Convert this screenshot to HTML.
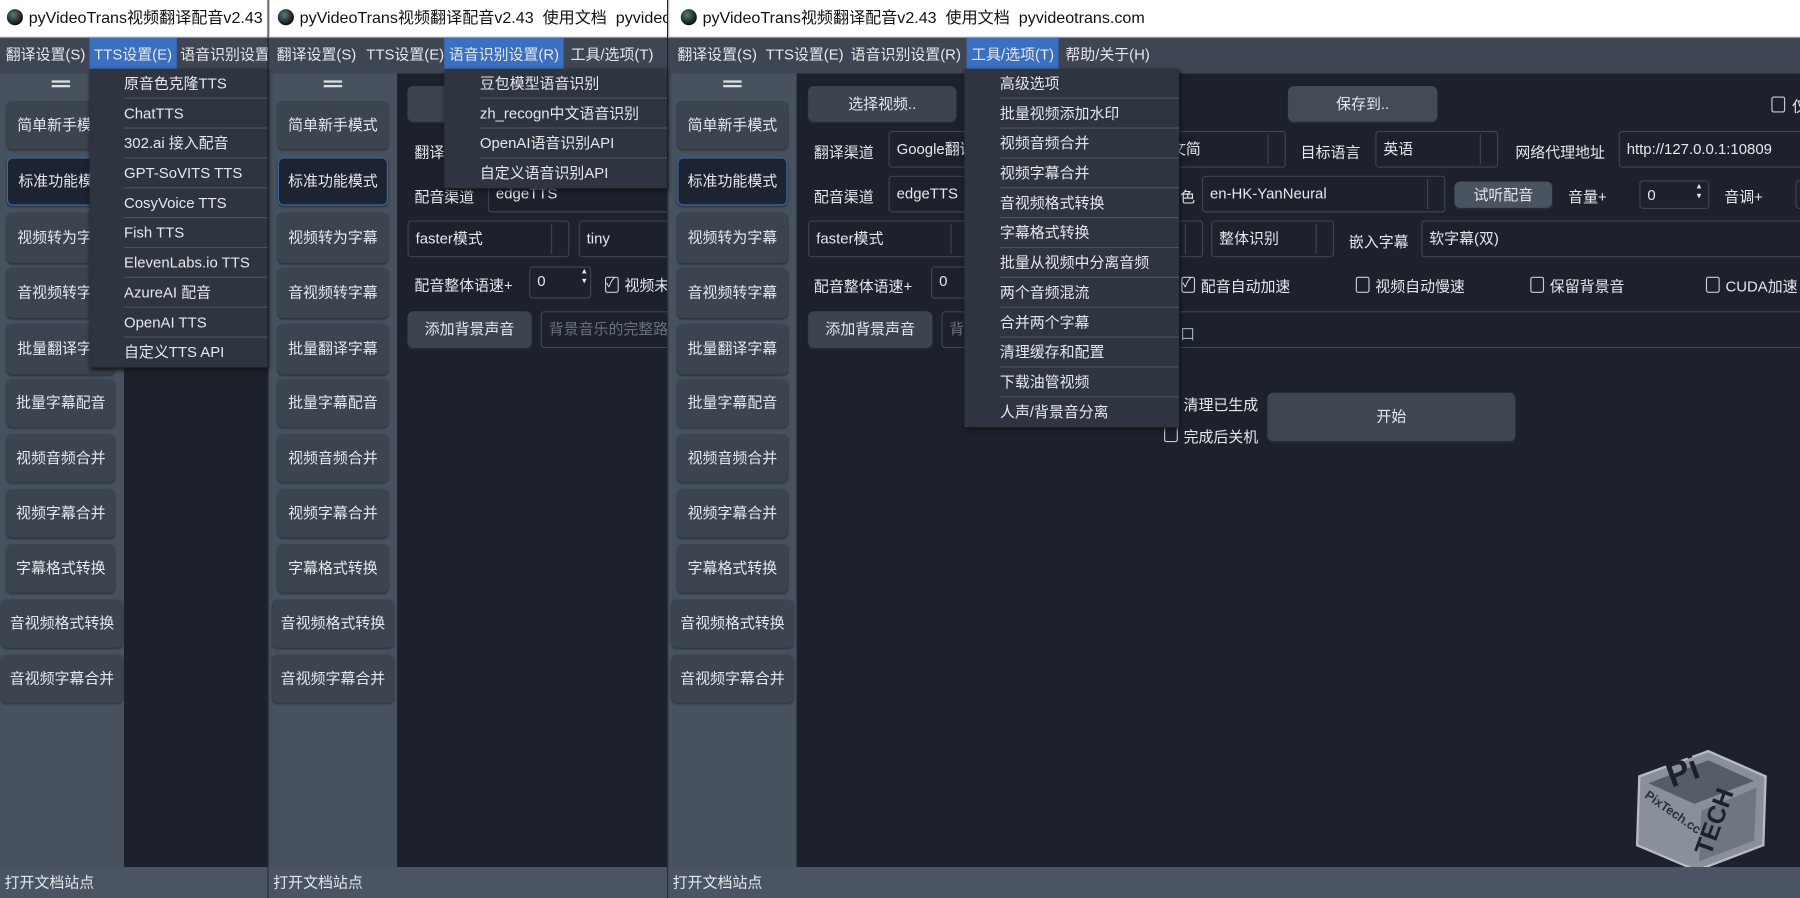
<!DOCTYPE html>
<html><head><meta charset="utf-8"><style>
*{margin:0;padding:0;box-sizing:border-box}
html,body{width:1800px;height:898px;overflow:hidden;background:#1c212b}
#w{position:absolute;left:0;top:0;width:1568px;height:782px;transform:scale(1.148,1.1484);transform-origin:0 0;font-family:"Liberation Sans","Noto Sans CJK SC",sans-serif;font-size:13px;color:#e6e8ec}
.a{position:absolute}
.tb{background:#fff;color:#111;top:0;height:33px;border-bottom:1px solid #999;font-size:14px;line-height:31px;white-space:nowrap;overflow:hidden}
.ic{display:inline-block;width:14px;height:14px;border-radius:50%;background:radial-gradient(circle at 40% 35%,#5a7a80,#111 70%);vertical-align:-2px;margin-right:5px}
.mb{top:33px;height:31px;background:#3f4653;line-height:30px;white-space:nowrap;overflow:hidden}
.mb span{position:absolute;top:0}
.hl{background:#3a6fc2;height:31px;padding:0 4px}
.sb{top:64px;bottom:27px;background:#48525f}
.ct{top:64px;bottom:27px;background:#1c212b}
.st{top:755px;height:27px;background:#4a5462;line-height:27px;padding-left:4px;color:#e6e8ec}
.btn{position:absolute;background:#3c4450;border-radius:5px;text-align:center;color:#e6e8ec;box-shadow:0 1px 2px #2a3038}
.sel{background:#1d2331;border:1px solid #3e6ba8}
.dd{position:absolute;background:#2f3540;top:60px;box-shadow:1px 2px 4px #111}
.dd div{height:26px;line-height:25px;border-bottom:1px solid #4b5360;white-space:nowrap;overflow:hidden}
.in{position:absolute;border:1px solid #3c4452;border-radius:3px;background:#1c212b;padding-left:6px;line-height:30px;white-space:nowrap;overflow:hidden}
.cb::after{content:"";position:absolute;right:0;top:2px;bottom:2px;width:14px;border-left:1px solid #3c4452}
.l{position:absolute;white-space:nowrap}
.ck{position:absolute;width:12px;height:14px;border:1px solid #c8ccd2;border-radius:2px}
.hm{position:absolute;width:16px;height:6px;border-top:2px solid #ddd;border-bottom:2px solid #ddd}
.clip{position:absolute;overflow:hidden}
</style></head><body><div id="w">
<div class="a tb" style="left:0;width:233px;padding-left:6px"><span class="ic"></span>pyVideoTrans视频翻译配音v2.43</div>
<div class="a tb" style="left:234px;width:347px;padding-left:7px;border-left:1px solid #bbb"><span class="ic"></span>pyVideoTrans视频翻译配音v2.43&nbsp; 使用文档&nbsp; pyvideotrans.com</div>
<div class="a tb" style="left:582px;width:986px;padding-left:10px;border-left:1px solid #bbb"><span class="ic"></span>pyVideoTrans视频翻译配音v2.43&nbsp; 使用文档&nbsp; pyvideotrans.com</div>
<div class="a mb" style="left:0;width:233px"><span style="left:5px">翻译设置(S)</span><span class="hl" style="left:78px">TTS设置(E)</span><span style="left:157px">语音识别设置</span></div>
<div class="a mb" style="left:234px;width:347px"><span style="left:7px">翻译设置(S)</span><span style="left:85px">TTS设置(E)</span><span class="hl" style="left:153px">语音识别设置(R)</span><span style="left:263px">工具/选项(T)</span></div>
<div class="a mb" style="left:582px;width:986px"><span style="left:8px">翻译设置(S)</span><span style="left:85px">TTS设置(E)</span><span style="left:159px">语音识别设置(R)</span><span class="hl" style="left:260px">工具/选项(T)</span><span style="left:346px">帮助/关于(H)</span></div>
<div class="a sb" style="left:0;width:108px"></div><div class="a ct" style="left:108px;width:125px"></div>
<div class="a sb" style="left:234px;width:112px"></div><div class="a ct" style="left:346px;width:235px"></div>
<div class="a sb" style="left:582px;width:112px"></div><div class="a ct" style="left:694px;width:874px"></div>
<div class="a" style="left:233px;top:64px;width:1px;height:718px;background:#2a2f38"></div>
<div class="a" style="left:581px;top:64px;width:1px;height:718px;background:#2a2f38"></div>
<div class="hm" style="left:45px;top:70px"></div><div class="hm" style="left:282px;top:70px"></div><div class="hm" style="left:630px;top:70px"></div>
<div class="btn" style="left:6px;top:88px;width:94px;height:42px;line-height:42px;text-align:left;padding-left:9px">简单新手模式</div>
<div class="btn sel" style="left:6px;top:137px;width:94px;height:42px;line-height:40px;text-align:left;padding-left:9px">标准功能模式</div>
<div class="btn" style="left:6px;top:185px;width:94px;height:44px;line-height:44px;text-align:left;padding-left:9px">视频转为字幕</div>
<div class="btn" style="left:6px;top:233px;width:94px;height:44px;line-height:44px;text-align:left;padding-left:9px">音视频转字幕</div>
<div class="btn" style="left:6px;top:282px;width:94px;height:44px;line-height:44px;text-align:left;padding-left:9px">批量翻译字幕</div>
<div class="btn" style="left:6px;top:330px;width:94px;height:42px;line-height:42px">批量字幕配音</div>
<div class="btn" style="left:6px;top:378px;width:94px;height:42px;line-height:42px">视频音频合并</div>
<div class="btn" style="left:6px;top:426px;width:94px;height:42px;line-height:42px">视频字幕合并</div>
<div class="btn" style="left:6px;top:474px;width:94px;height:42px;line-height:42px">字幕格式转换</div>
<div class="btn" style="left:1px;top:522px;width:106px;height:42px;line-height:42px">音视频格式转换</div>
<div class="btn" style="left:1px;top:570px;width:106px;height:42px;line-height:42px">音视频字幕合并</div>
<div class="btn" style="left:242px;top:88px;width:96px;height:42px;line-height:42px">简单新手模式</div>
<div class="btn sel" style="left:242px;top:137px;width:96px;height:42px;line-height:40px">标准功能模式</div>
<div class="btn" style="left:242px;top:185px;width:96px;height:44px;line-height:44px">视频转为字幕</div>
<div class="btn" style="left:242px;top:233px;width:96px;height:44px;line-height:44px">音视频转字幕</div>
<div class="btn" style="left:242px;top:282px;width:96px;height:44px;line-height:44px">批量翻译字幕</div>
<div class="btn" style="left:242px;top:330px;width:96px;height:42px;line-height:42px">批量字幕配音</div>
<div class="btn" style="left:242px;top:378px;width:96px;height:42px;line-height:42px">视频音频合并</div>
<div class="btn" style="left:242px;top:426px;width:96px;height:42px;line-height:42px">视频字幕合并</div>
<div class="btn" style="left:242px;top:474px;width:96px;height:42px;line-height:42px">字幕格式转换</div>
<div class="btn" style="left:237px;top:522px;width:106px;height:42px;line-height:42px">音视频格式转换</div>
<div class="btn" style="left:237px;top:570px;width:106px;height:42px;line-height:42px">音视频字幕合并</div>
<div class="btn" style="left:590px;top:88px;width:96px;height:42px;line-height:42px">简单新手模式</div>
<div class="btn sel" style="left:590px;top:137px;width:96px;height:42px;line-height:40px">标准功能模式</div>
<div class="btn" style="left:590px;top:185px;width:96px;height:44px;line-height:44px">视频转为字幕</div>
<div class="btn" style="left:590px;top:233px;width:96px;height:44px;line-height:44px">音视频转字幕</div>
<div class="btn" style="left:590px;top:282px;width:96px;height:44px;line-height:44px">批量翻译字幕</div>
<div class="btn" style="left:590px;top:330px;width:96px;height:42px;line-height:42px">批量字幕配音</div>
<div class="btn" style="left:590px;top:378px;width:96px;height:42px;line-height:42px">视频音频合并</div>
<div class="btn" style="left:590px;top:426px;width:96px;height:42px;line-height:42px">视频字幕合并</div>
<div class="btn" style="left:590px;top:474px;width:96px;height:42px;line-height:42px">字幕格式转换</div>
<div class="btn" style="left:585px;top:522px;width:106px;height:42px;line-height:42px">音视频格式转换</div>
<div class="btn" style="left:585px;top:570px;width:106px;height:42px;line-height:42px">音视频字幕合并</div>
<!-- panel2 content clipped -->
<div class="clip" style="left:346px;top:64px;width:235px;height:691px">
<div class="btn" style="left:9px;top:11px;width:60px;height:31px"></div>
<div class="l" style="left:15px;top:58px">翻译</div>
<div class="l" style="left:15px;top:97px">配音渠道</div>
<div class="in" style="left:79px;top:89px;width:170px;height:32px">edgeTTS</div>
<div class="in cb" style="left:9px;top:128px;width:141px;height:32px">faster模式</div>
<div class="in" style="left:158px;top:128px;width:90px;height:32px">tiny</div>
<div class="l" style="left:15px;top:174px">配音整体语速+</div>
<div class="in" style="left:115px;top:168px;width:54px;height:28px;line-height:24px">0</div>
<div class="l" style="left:161px;top:167px;font-size:8px;line-height:9px">▴<br>▾</div>
<div class="ck" style="left:181px;top:177px"></div><div class="l" style="left:182px;top:174px;font-size:11px">✓</div>
<div class="l" style="left:198px;top:174px">视频未处理</div>
<div class="btn" style="left:9px;top:207px;width:108px;height:32px;line-height:32px">添加背景声音</div>
<div class="in" style="left:125px;top:207px;width:130px;height:32px;color:#6a717c">背景音乐的完整路径</div>
</div>
<!-- panel3 content -->
<div class="btn" style="left:704px;top:75px;width:129px;height:31px;line-height:31px">选择视频..</div>
<div class="btn" style="left:1122px;top:75px;width:130px;height:31px;line-height:31px;background:#434b57">保存到..</div>
<div class="ck" style="left:1543px;top:84px"></div><div class="l" style="left:1561px;top:82px">仅</div>
<div class="l" style="left:709px;top:122px">翻译渠道</div>
<div class="in" style="left:774px;top:114px;width:80px;height:32px">Google翻译</div>
<div class="in cb" style="left:1000px;top:114px;width:120px;height:32px">中文简</div>
<div class="l" style="left:1133px;top:122px">目标语言</div>
<div class="in cb" style="left:1198px;top:114px;width:107px;height:32px">英语</div>
<div class="l" style="left:1320px;top:122px">网络代理地址</div>
<div class="in" style="left:1410px;top:114px;width:170px;height:32px">http://127.0.0.1:10809</div>
<div class="l" style="left:709px;top:161px">配音渠道</div>
<div class="in" style="left:774px;top:153px;width:80px;height:32px">edgeTTS</div>
<div class="l" style="left:1028px;top:161px">色</div>
<div class="in cb" style="left:1047px;top:153px;width:212px;height:32px">en-HK-YanNeural</div>
<div class="btn" style="left:1267px;top:158px;width:85px;height:23px;line-height:23px;background:#4a5360">试听配音</div>
<div class="l" style="left:1366px;top:161px">音量+</div>
<div class="in" style="left:1428px;top:157px;width:61px;height:25px;line-height:24px">0</div>
<div class="l" style="left:1478px;top:157px;font-size:8px;line-height:9px">▴<br>▾</div>
<div class="l" style="left:1502px;top:161px">音调+</div>
<div class="in" style="left:1564px;top:157px;width:20px;height:25px"></div>
<div class="in cb" style="left:704px;top:192px;width:140px;height:32px">faster模式</div>
<div class="in cb" style="left:1000px;top:192px;width:48px;height:32px"></div>
<div class="in cb" style="left:1055px;top:192px;width:107px;height:32px">整体识别</div>
<div class="l" style="left:1175px;top:200px">嵌入字幕</div>
<div class="in" style="left:1238px;top:192px;width:340px;height:32px">软字幕(双)</div>
<div class="l" style="left:709px;top:239px">配音整体语速+</div>
<div class="in" style="left:811px;top:232px;width:40px;height:28px;line-height:24px">0</div>
<div class="ck" style="left:1029px;top:241px"></div><div class="l" style="left:1030px;top:238px;font-size:11px">✓</div>
<div class="l" style="left:1046px;top:239px">配音自动加速</div>
<div class="ck" style="left:1181px;top:241px"></div><div class="l" style="left:1198px;top:239px">视频自动慢速</div>
<div class="ck" style="left:1333px;top:241px"></div><div class="l" style="left:1350px;top:239px">保留背景音</div>
<div class="ck" style="left:1486px;top:241px"></div><div class="l" style="left:1503px;top:239px">CUDA加速</div>
<div class="btn" style="left:704px;top:271px;width:108px;height:32px;line-height:32px">添加背景声音</div>
<div class="in" style="left:820px;top:271px;width:760px;height:32px;color:#6a717c">背</div>
<div class="l" style="left:1028px;top:280px;color:#9aa">口</div>
<div class="l" style="left:1031px;top:342px">清理已生成</div>
<div class="ck" style="left:1014px;top:371px"></div><div class="l" style="left:1031px;top:370px">完成后关机</div>
<div class="btn" style="left:1104px;top:342px;width:216px;height:42px;line-height:42px;background:#3e4652">开始</div>
<svg class="a" style="left:1418px;top:636px" width="136" height="124" viewBox="0 0 136 124">
<polygon points="10,40 70,18 120,40 118,100 60,122 8,100" fill="#8a9099" stroke="#b8bcc2" stroke-width="2"/>
<polygon points="18,46 70,26 110,44 58,64" fill="#565d68"/>
<polygon points="64,70 112,50 110,96 62,114" fill="#6f7680"/>
<text x="14" y="58" transform="rotate(35 14 58)" font-family="Liberation Sans" font-weight="bold" font-size="11" fill="#2a3038">PixTech.cc</text>
<text x="38" y="50" transform="rotate(-20 38 50)" font-family="Liberation Sans" font-weight="bold" font-size="30" fill="#1c212b">Pi</text>
<text x="72" y="110" transform="rotate(-70 72 110)" font-family="Liberation Sans" font-weight="bold" font-size="22" fill="#1c212b">TECH</text>
</svg>
<div class="a st" style="left:0;width:233px">打开文档站点</div>
<div class="a st" style="left:234px;width:347px">打开文档站点</div>
<div class="a st" style="left:582px;width:986px">打开文档站点</div>
<div class="dd" style="left:78px;width:155px;padding-left:30px"><div>原音色克隆TTS</div><div>ChatTTS</div><div>302.ai 接入配音</div><div>GPT-SoVITS TTS</div><div>CosyVoice TTS</div><div>Fish TTS</div><div>ElevenLabs.io TTS</div><div>AzureAI 配音</div><div>OpenAI TTS</div><div style="border:0">自定义TTS API</div></div>
<div class="dd" style="left:387px;width:194px;padding-left:31px"><div>豆包模型语音识别</div><div>zh_recogn中文语音识别</div><div>OpenAI语音识别API</div><div style="border:0">自定义语音识别API</div></div>
<div class="dd" style="left:840px;width:187px;padding-left:31px"><div>高级选项</div><div>批量视频添加水印</div><div>视频音频合并</div><div>视频字幕合并</div><div>音视频格式转换</div><div>字幕格式转换</div><div>批量从视频中分离音频</div><div>两个音频混流</div><div>合并两个字幕</div><div>清理缓存和配置</div><div>下载油管视频</div><div style="border:0">人声/背景音分离</div></div>
</div></body></html>
